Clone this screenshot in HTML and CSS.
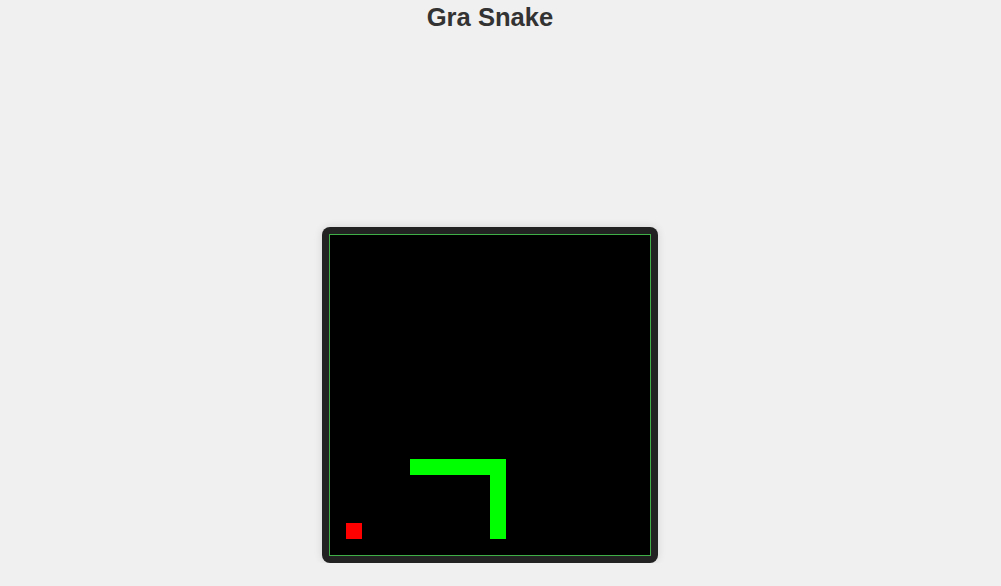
FILE: index.html
```html
<!DOCTYPE html>
<html lang="pl">
<head>
<meta charset="utf-8">
<title>Gra Snake</title>
<link rel="stylesheet" href="styles.css">
</head>
<body>
<main class="page">
  <h1 class="title">Gra Snake</h1>
  <div class="game">
    <div class="board">
      <div class="snake snake-h"></div>
      <div class="snake snake-v"></div>
      <div class="food"></div>
    </div>
  </div>
</main>
</body>
</html>
```

FILE: styles.css
```css
html, body {
  margin: 0;
  padding: 0;
  background: #f0f0f0;
}
body {
  font-family: "Liberation Sans", Arial, sans-serif;
  color: #333;
}
.page {
  width: 980px;
  display: flex;
  flex-direction: column;
  align-items: center;
}
.title {
  margin: 2px 0 0;
  font-size: 25.6px;
  line-height: 30px;
  font-weight: bold;
  color: #333;
}
.game {
  margin-top: 195px;
  padding: 7px;
  background: #222;
  border-radius: 8px;
  box-shadow: 0 0 8px rgba(0, 0, 0, 0.12);
}
.board {
  display: grid;
  grid-template-columns: repeat(20, 16px);
  grid-template-rows: repeat(20, 16px);
  background: #000;
  border: 1px solid #3fae46;
}
.snake {
  background: #00ff00;
}
.snake-h {
  grid-column: 6 / 12;
  grid-row: 15;
}
.snake-v {
  grid-column: 11;
  grid-row: 15 / 20;
}
.food {
  grid-column: 2;
  grid-row: 19;
  background: #ff0000;
}
```
